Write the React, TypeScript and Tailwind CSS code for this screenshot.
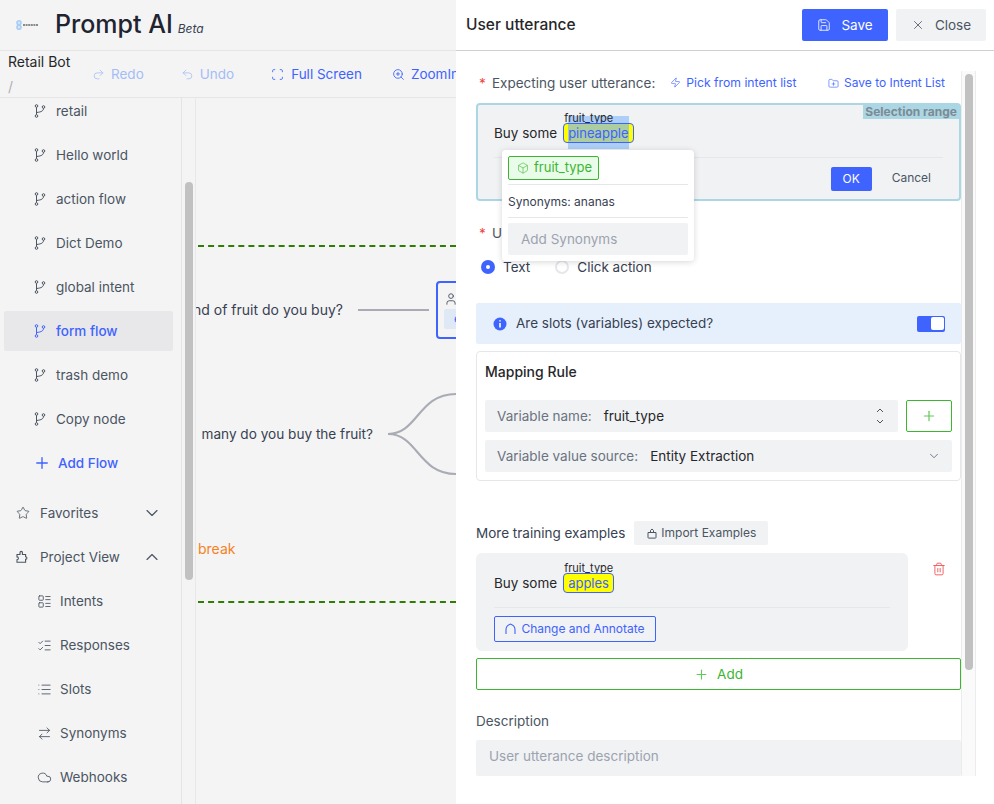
import {
  ArrowRightLeft,
  Box,
  ChevronDown,
  ChevronUp,
  Cloud,
  FolderPlus,
  LayoutList,
  List,
  ListChecks,
  Plus,
  Redo2,
  Save,
  Scan,
  Star,
  Trash2,
  Undo2,
  User,
  X,
  Zap,
  ZoomIn,
} from "lucide-react";

// ---- sidebar data ----------------------------------------------------------
const flows = ["retail", "Hello world", "action flow", "Dict Demo", "global intent", "form flow", "trash demo", "Copy node"];

const projectItems = [
  { label: "Intents", Icon: LayoutList },
  { label: "Responses", Icon: ListChecks },
  { label: "Slots", Icon: List },
  { label: "Synonyms", Icon: ArrowRightLeft },
  { label: "Webhooks", Icon: Cloud },
];

function Logo() {
  return (
    <svg width="24" height="10" viewBox="0 0 24 10" className="shrink-0">
      <circle cx="3" cy="2.8" r="2" fill="#d4e6f9" stroke="#a9cdf3" strokeWidth="1.6" />
      <circle cx="3" cy="7.2" r="2" fill="#d4e6f9" stroke="#a9cdf3" strokeWidth="1.6" />
      <path d="M7 5h15" stroke="#8a8a8a" strokeWidth="2" strokeDasharray="2 0.6" />
    </svg>
  );
}

function FlowIcon() {
  return (
    <svg width="12" height="14" viewBox="0 0 12 14" fill="none" stroke="currentColor" strokeWidth="1" className="shrink-0">
      <circle cx="2.5" cy="2" r="1.3" />
      <circle cx="2.5" cy="12" r="1.3" />
      <circle cx="9.5" cy="3" r="1.3" />
      <path d="M2.5 3.3v7.4M9.5 4.3c0 2.5-2 3.7-7 4.2" />
    </svg>
  );
}

function Sidebar() {
  return (
    <div className="flex h-full w-[196px] shrink-0 overflow-hidden border-r border-[#e8e8e8]">
      <div className="w-[182px] shrink-0 border-r border-[#e4e4e4]">
        <div className="-mt-[7px] flex flex-col gap-1 pl-1 pr-2">
          {flows.map((name) => {
            const active = name === "form flow";
            return (
              <div
                key={name}
                className={`flex h-10 items-center gap-[10px] rounded-[2px] pl-[30px] text-[13.5px] ${
                  active ? "bg-[#e8e8ea] font-medium text-[#3e63ff]" : "text-[#4b5563]"
                }`}
              >
                <FlowIcon />
                {name}
              </div>
            );
          })}
          <div className="flex h-10 items-center gap-[7px] pl-[29px] text-[13.5px] font-medium text-[#3e63ff]">
            <Plus size={18} strokeWidth={1.8} />
            Add Flow
          </div>
        </div>

        <div className="mt-[10px] flex flex-col gap-1 pl-1 pr-2">
          <div className="flex h-10 items-center pl-3 pr-[11px] text-[13.5px] text-[#4b5563]">
            <Star size={14} strokeWidth={1.4} />
            <span className="ml-[10px]">Favorites</span>
            <ChevronDown size={20} strokeWidth={1.4} className="ml-auto" />
          </div>
          <div className="flex h-10 items-center pl-3 pr-[11px] text-[13.5px] text-[#4b5563]">
            <svg width="14" height="14" viewBox="0 0 14 14" fill="none" stroke="currentColor" strokeWidth="1.1">
              <path d="M1 4.5h3V2.6a1.2 1.2 0 0 1 2.4 0v1.9h3.2v2.2a1.3 1.3 0 0 1 0 2.6v3H1V9.7a1.4 1.4 0 0 0 0-2.8z" />
            </svg>
            <span className="ml-[10px]">Project View</span>
            <ChevronUp size={20} strokeWidth={1.4} className="ml-auto" />
          </div>
          {projectItems.map(({ label, Icon }) => (
            <div key={label} className="flex h-10 items-center pl-[33px] text-[13.5px] text-[#4b5563]">
              <span className="flex w-[23px] shrink-0">
                <Icon size={15} strokeWidth={1.4} />
              </span>
              {label}
            </div>
          ))}
        </div>
      </div>
      <div className="w-[13px] shrink-0 pl-[3px] pt-[84px]">
        <div className="h-[398px] w-2 rounded-full bg-[#c1c1c1]" />
      </div>
    </div>
  );
}

function Canvas() {
  return (
    <div className="relative h-full flex-1 overflow-hidden bg-[#f4f4f4]">
      <div className="absolute left-[2px] right-0 top-[147px] border-t-2 border-dashed border-[#2f7d05]" />
      <div className="absolute left-[2px] right-0 top-[503px] border-t-2 border-dashed border-[#2f7d05]" />

      <div className="absolute right-[113px] top-[202px] whitespace-nowrap text-sm text-[#374151]">
        What kind of fruit do you buy?
      </div>
      <div className="absolute left-[162px] top-[211px] h-[2px] w-[71px] bg-[#a9abb5]" />

      <div className="absolute left-[240px] top-[183px] h-[58px] w-[120px] rounded-[4px] border-2 border-[#3e63ff] pl-[6px]">
        <User size={14} strokeWidth={1.6} className="mt-[9px] text-[#4b5563]" />
        <div className="mt-[3px] h-5 rounded-[2px] bg-[#dfe8f5] pl-[10px] text-xs leading-5 text-[#3e63ff]">entity</div>
      </div>

      <div className="absolute right-[83px] top-[326px] whitespace-nowrap text-[13.6px] text-[#374151]">
        many do you buy the fruit?
      </div>
      <svg className="absolute left-[190px] top-[290px]" width="72" height="90" viewBox="0 0 72 90" fill="none">
        <path d="M2 46C32 46 32 6 70 6M2 46C32 46 32 86 70 86" stroke="#a9abb5" strokeWidth="2" />
      </svg>

      <div className="absolute left-[2px] top-[441px] text-sm text-[#f5821f]">break</div>
    </div>
  );
}

function LeftPane() {
  return (
    <div className="flex h-full w-[456px] shrink-0 flex-col overflow-hidden bg-[#f4f4f4]">
      <div className="flex h-[51px] shrink-0 items-center border-b border-[#e5e5e5] pl-4">
        <Logo />
        <span className="ml-[15px] text-[25px] font-medium text-[#1f2430]">Prompt AI</span>
        <span className="ml-[5px] mt-2 text-xs italic text-[#374151]">Beta</span>
      </div>

      <div className="flex h-[47px] shrink-0 items-start border-b border-[#e5e5e5] pl-2">
        <div className="w-[84px] shrink-0 pt-[1px] text-sm leading-5 text-[#27272a]">
          <div>Retail Bot</div>
          <div className="mt-[5px] text-[#b0b0b0]">/</div>
        </div>
        <div className="flex items-center whitespace-nowrap pt-[13px] text-[13.5px] text-[#3e63ff]">
          <span className="flex items-center gap-[6px] text-[#a4bdf7]">
            <Redo2 size={13} strokeWidth={1.4} />
            Redo
          </span>
          <span className="ml-[37px] flex items-center gap-[6px] text-[#a4bdf7]">
            <Undo2 size={13} strokeWidth={1.4} />
            Undo
          </span>
          <span className="ml-[37px] flex items-center gap-[7px]">
            <Scan size={13} strokeWidth={1.6} />
            Full Screen
          </span>
          <span className="ml-[30px] flex items-center gap-[6px]">
            <ZoomIn size={13} strokeWidth={1.6} />
            ZoomIn
          </span>
        </div>
      </div>

      <div className="flex min-h-0 flex-1">
        <Sidebar />
        <Canvas />
      </div>
    </div>
  );
}

function Annotated({ word, selected }: { word: string; selected?: boolean }) {
  return (
    <div className="flex items-center text-[13.5px] leading-5 text-[#27272a]">
      Buy some
      <span className="relative ml-[6px] inline-block">
        {selected && <span className="absolute -top-[7px] bottom-[-6px] left-[5px] right-[5px] bg-[#accef7]" />}
        <span className="absolute -top-[12px] left-[1px] whitespace-nowrap text-[11px] leading-[14px] text-[#27272a]">
          fruit_type
        </span>
        <span className="relative block h-5 rounded-[4px] border border-[#3e63ff] bg-[#ffff00] px-[4px] text-[13px] leading-[18px] text-[#3e63ff]">
          <span className={selected ? "block bg-[#abcd9f]" : "block"}>{word}</span>
        </span>
      </span>
    </div>
  );
}

function UtteranceBox() {
  return (
    <div className="relative mt-[10px] h-[98px] rounded-[4px] border-2 border-[#abd7e4] bg-[#f1f2f4] px-4 pt-[18px]">
      <div className="absolute right-0 top-0 bg-[#abd7e4] px-[2px] text-xs font-bold leading-[14px] text-[#7d8a94]">
        Selection range
      </div>
      <Annotated word="pineapple" selected />
      <div className="mt-[14px] border-t border-[#e5e7eb]" />
      <div className="mt-[9px] flex items-center justify-end pr-3 text-xs">
        <span className="flex h-6 w-[41px] items-center justify-center rounded-[2px] bg-[#3e63ff] text-white">OK</span>
        <span className="mb-[2px] ml-5 text-[#4b5563]">Cancel</span>
      </div>

      {/* entity popover */}
      <div className="absolute left-6 top-[45px] z-10 h-[111px] w-[192px] rounded-[4px] bg-white p-[6px] shadow-[0_1px_6px_rgba(0,0,0,0.16)]">
        <div className="flex h-6 w-[91px] items-center gap-[5px] rounded-[2px] border border-[#3cb531] bg-[#e9fce9] pl-2 text-[13px] text-[#3cb531]">
          <Box size={12} strokeWidth={1.2} />
          fruit_type
        </div>
        <div className="mt-[4px] border-t border-[#e5e7eb]" />
        <div className="h-[32px] text-xs leading-[33px] text-[#374151]">Synonyms: ananas</div>
        <div className="border-t border-[#e5e7eb]" />
        <div className="mt-[5px] h-8 rounded-[2px] bg-[#f1f2f4] pl-[13px] text-[13.5px] leading-8 text-[#9ca3af]">
          Add Synonyms
        </div>
      </div>
    </div>
  );
}

function InfoIcon() {
  return (
    <svg width="14" height="14" viewBox="0 0 14 14" className="shrink-0">
      <circle cx="7" cy="7" r="6.5" fill="#3e63ff" />
      <path d="M7 3.2v1.4M7 6v4.6" stroke="#fff" strokeWidth="1.6" />
    </svg>
  );
}

function UpDownIcon() {
  return (
    <svg width="8" height="16" viewBox="0 0 8 16" fill="none" stroke="#4b5563" strokeWidth="1" className="ml-auto">
      <path d="M1 4l3-3 3 3M1 12l3 3 3-3" />
    </svg>
  );
}

function RightPane() {
  return (
    <div className="flex h-full flex-1 flex-col bg-white">
      <div className="flex h-[51px] shrink-0 items-center border-b border-[#cfcfcf] pl-[10px] pr-2">
        <span className="text-[15.5px] font-medium text-[#27272a]">User utterance</span>
        <button className="ml-auto flex h-8 w-[86px] items-center justify-center gap-[10px] rounded-[2px] bg-[#3e63ff] text-[13.5px] text-white">
          <Save size={14} strokeWidth={1.4} />
          Save
        </button>
        <button className="ml-2 flex h-8 w-[90px] items-center justify-center gap-[10px] rounded-[2px] bg-[#f1f2f4] text-[13.5px] text-[#4b5563]">
          <X size={14} strokeWidth={1.4} />
          Close
        </button>
      </div>

      <div className="flex h-[725px] shrink-0 overflow-hidden pl-5">
        <div className="w-[485px] shrink-0 pt-[22px]">
          <div className="flex h-5 items-center text-[13.5px] text-[#4b5563]">
            <span className="w-4 pl-[3px] text-[#ef4444]">*</span>
            <span>Expecting user utterance:</span>
            <span className="ml-[15px] flex items-center gap-[5px] text-[12.2px] text-[#3e63ff]">
              <Zap size={11} strokeWidth={1.4} />
              Pick from intent list
            </span>
            <span className="ml-auto mr-4 flex items-center gap-[5px] text-xs text-[#3e63ff]">
              <FolderPlus size={11} strokeWidth={1.4} />
              Save to Intent List
            </span>
          </div>

          <UtteranceBox />

          <div className="mt-[22px] flex h-5 items-center text-[13.5px] text-[#4b5563]">
            <span className="w-4 pl-[3px] text-[#ef4444]">*</span>
            Utterance type
          </div>
          <div className="mt-[14px] flex h-5 items-center pl-[5px] text-[13.5px] text-[#374151]">
            <span className="flex h-[14px] w-[14px] items-center justify-center rounded-full bg-[#3e63ff]">
              <span className="h-1 w-1 rounded-full bg-white" />
            </span>
            <span className="ml-2">Text</span>
            <span className="ml-[25px] h-[14px] w-[14px] rounded-full border-2 border-[#e5e7eb]" />
            <span className="ml-2">Click action</span>
          </div>

          <div className="mt-[26px] flex h-[41px] items-center rounded-[2px] bg-[#e6f0fd] pl-[17px] pr-4 text-[13.5px] text-[#374151]">
            <InfoIcon />
            <span className="ml-[9px]">Are slots (variables) expected?</span>
            <span className="ml-auto flex h-4 w-7 items-center justify-end rounded-[2px] bg-[#3e63ff] pr-[1px]">
              <span className="h-[13px] w-[13px] rounded-[2px] bg-white" />
            </span>
          </div>

          <div className="mt-[7px] h-[130px] rounded-[4px] border border-[#e5e7eb] px-2 pt-[10px]">
            <div className="text-sm font-medium leading-[20px] text-[#27272a]">Mapping Rule</div>
            <div className="mt-[18px] flex gap-2">
              <div className="flex h-8 flex-1 items-center rounded-[2px] bg-[#f1f2f4] pl-3 pr-[14px] text-[13.5px] text-[#27272a]">
                <span className="text-[#6b7280]">Variable name:</span>
                <span className="ml-3">fruit_type</span>
                <UpDownIcon />
              </div>
              <div className="flex h-8 w-[46px] items-center justify-center rounded-[2px] border border-[#3cb531] text-[#63c95b]">
                <Plus size={16} strokeWidth={1.8} />
              </div>
            </div>
            <div className="mt-2 flex h-8 items-center rounded-[2px] bg-[#f1f2f4] pl-3 pr-[11px] text-[13.5px] text-[#27272a]">
              <span className="text-[#6b7280]">Variable value source:</span>
              <span className="ml-3">Entity Extraction</span>
              <ChevronDown size={14} strokeWidth={1.3} className="ml-auto text-[#4b5563]" />
            </div>
          </div>

          <div className="mt-[40px] flex h-6 items-center text-[13.5px] text-[#374151]">
            More training examples
            <span className="ml-[9px] flex h-6 w-[134px] items-center gap-1 rounded-[2px] bg-[#f1f2f4] pl-[13px] text-xs text-[#4b5563]">
              <svg width="10" height="11" viewBox="0 0 10 11" fill="none" stroke="currentColor" strokeWidth="1">
                <path d="M1 4.5h8v5a.6.6 0 0 1-.6.6H1.6a.6.6 0 0 1-.6-.6zM3.5 4.5V2.4L5 1l1.5 1.4v2.1" />
              </svg>
              Import Examples
            </span>
          </div>

          <div className="mt-2 flex">
            <div className="h-[98px] w-[432px] rounded-md bg-[#f1f2f4] px-[18px] pt-5">
              <Annotated word="apples" />
              <div className="mt-[14px] border-t border-[#e5e7eb]" />
              <div className="mt-2 flex h-[26px] w-[162px] items-center justify-center gap-[5px] rounded-[2px] border border-[#3e63ff] text-xs text-[#3e63ff]">
                <svg width="11" height="12" viewBox="0 0 11 12" fill="none" stroke="currentColor" strokeWidth="1.1">
                  <path d="M1 11V7a4.5 5.5 0 0 1 3-5.2L5.5 1 7 1.8A4.5 5.5 0 0 1 10 7v4" />
                </svg>
                Change and Annotate
              </div>
            </div>
            <Trash2 size={14} strokeWidth={1.6} className="ml-6 mt-[9px] text-[#ef5a5a]" />
          </div>

          <div className="mt-[7px] flex h-8 items-center justify-center gap-2 rounded-[2px] border border-[#3cb531] text-[13.5px] text-[#3cb531]">
            <Plus size={15} strokeWidth={1.8} className="text-[#63c95b]" />
            Add
          </div>

          <div className="mt-[21px] h-5 text-[13.5px] leading-5 text-[#4b5563]">Description</div>
          <div className="mt-[9px] h-9 rounded-[2px] bg-[#f1f2f4] pl-[13px] text-[13.5px] leading-8 text-[#9ca3af]">
            User utterance description
          </div>
        </div>

        {/* scrollbar */}
        <div className="mt-5 w-[15px] shrink-0 border-x border-[#ececec] bg-[#fafafa] pl-[3px] pt-[3px]">
          <div className="h-[596px] w-2 rounded-full bg-[#c1c1c1]" />
        </div>
      </div>
    </div>
  );
}

export default function App() {
  return (
    <div
      className="flex h-[804px] w-[994px] overflow-hidden"
      style={{ fontFamily: "Inter, 'Liberation Sans', sans-serif" }}
    >
      <LeftPane />
      <RightPane />
    </div>
  );
}
